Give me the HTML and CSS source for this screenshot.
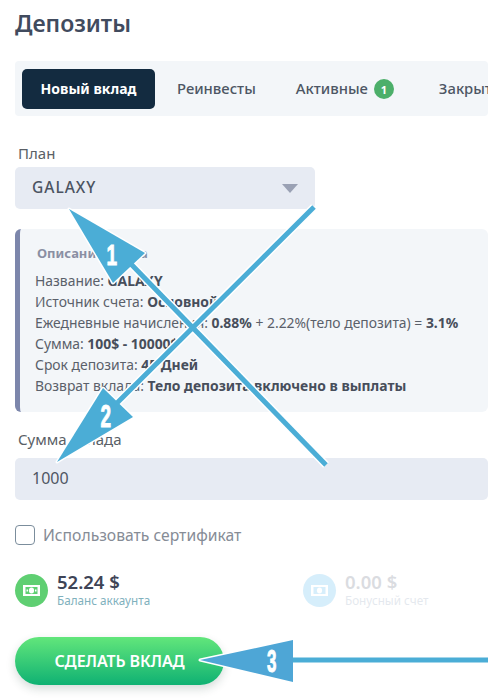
FILE: index.html
```html
<!DOCTYPE html>
<html lang="ru">
<head>
<meta charset="utf-8">
<title>Депозиты</title>
<link rel="stylesheet" href="styles.css">
</head>
<body>
<main class="page">
  <h1 class="title">Депозиты</h1>
  <nav class="tabs">
    <span class="tab tab-active">Новый вклад</span>
    <span class="tab tab-reinvest">Реинвесты</span>
    <span class="tab tab-live">Активные <span class="badge">1</span></span>
    <span class="tab">Закрытые</span>
  </nav>
  <label class="label label-plan">План</label>
  <div class="select">
    <span>GALAXY</span>
    <svg class="caret" width="16" height="9" viewBox="0 0 16 9"><path d="M0 0h16L8 9z"/></svg>
  </div>
  <section class="info">
    <h2 class="info-title">Описание плана</h2>
    <p>Название: <b>GALAXY</b></p>
    <p>Источник счета: <b>Основной</b></p>
    <p>Ежедневные начисления: <b>0.88%</b> + 2.22%(тело депозита) = <b>3.1%</b></p>
    <p>Сумма: <b>100$ - 10000$</b></p>
    <p>Срок депозита: <b>45 Дней</b></p>
    <p>Возврат вклада: <b>Тело депозита включено в выплаты</b></p>
  </section>
  <label class="label label-sum">Сумма вклада</label>
  <div class="input">1000</div>
  <div class="check">
    <span class="box"></span>
    <span>Использовать сертификат</span>
  </div>
  <div class="balances">
    <div class="balance">
      <span class="coin coin-green">
        <svg width="17" height="11" viewBox="0 0 17 11"><path fill="#fff" fill-rule="evenodd" d="M0 0h17v11H0zM2.500 2v7h12V2z"/><ellipse cx="8.500" cy="5.500" rx="2.600" ry="3" fill="#fff"/><rect x="3.500" y="4.500" width="1.500" height="2" fill="#fff"/><rect x="12" y="4.500" width="1.500" height="2" fill="#fff"/></svg>
      </span>
      <div>
        <div class="amount">52.24 $</div>
        <div class="caption">Баланс аккаунта</div>
      </div>
    </div>
    <div class="balance balance-muted">
      <span class="coin coin-blue">
        <svg width="17" height="11" viewBox="0 0 17 11"><path fill="#fff" fill-rule="evenodd" d="M0 0h17v11H0zM2.500 2v7h12V2z"/><ellipse cx="8.500" cy="5.500" rx="2.600" ry="3" fill="#fff"/></svg>
      </span>
      <div>
        <div class="amount">0.00 $</div>
        <div class="caption">Бонусный счет</div>
      </div>
    </div>
  </div>
  <button class="submit">СДЕЛАТЬ ВКЛАД</button>
</main>
<svg class="arrows" width="488" height="700" viewBox="0 0 488 700">
  <g class="halo">
    <path d="M69 209L145 253L113 283Z"/>
    <path d="M130 263L326 465"/>
    <path d="M57 462L103 388L133 417Z"/>
    <path d="M116 404L314 207"/>
    <path d="M200 660L293 640V682Z"/>
  </g>
  <g class="shaft">
    <path d="M130 263L326 465"/>
    <path d="M116 404L314 207"/>
    <path d="M290 660H488"/>
  </g>
  <path class="head" d="M69 209L145 253L113 283Z"/>
  <path class="head" d="M57 462L103 388L133 417Z"/>
  <path class="head head-3" d="M200 660L293 640V682Z"/>
  <text class="digit" transform="translate(106.500 265) scale(.95 1.450)">1</text>
  <text class="digit" transform="translate(100.500 427) scale(.95 1.550)">2</text>
  <text class="digit" transform="translate(267 672) scale(.85 1.550)">3</text>
</svg>
</body>
</html>
```
FILE: styles.css
```css
html, body {
  margin: 0;
  height: 700px;
  overflow: hidden;
  background: #fff;
}
body {
  position: relative;
  font-family: "Noto Sans", "Open Sans", sans-serif;
  color: #4a5260;
}
.page {
  width: 488px;
  padding: 8px 0 0 15px;
  box-sizing: border-box;
}
.title {
  margin: 0;
  font-size: 23px;
  line-height: 30px;
  font-weight: 600;
  color: #414b5e;
}
.tabs {
  display: flex;
  align-items: center;
  height: 55px;
  margin-top: 23px;
  padding-left: 7px;
  overflow: hidden;
  background: #f3f6f9;
  border-radius: 4px;
  font-size: 14.800px;
  font-weight: 500;
  color: #4d5664;
}
.tab {
  display: flex;
  flex: none;
  align-items: center;
  gap: 6px;
  height: 40px;
  padding-bottom: 1px;
  box-sizing: border-box;
  white-space: nowrap;
}
.tab-active {
  width: 133px;
  justify-content: center;
  background: #132b40;
  border-radius: 5px;
  color: #fff;
  font-size: 14px;
  font-weight: 700;
}
.tab-reinvest {
  margin-left: 22px;
}
.tab-live {
  margin-left: 40px;
  margin-right: 45px;
}
.badge {
  display: flex;
  align-items: center;
  justify-content: center;
  width: 20px;
  height: 20px;
  margin-top: 2px;
  border-radius: 50%;
  background: #4caf6a;
  color: #fff;
  font-size: 11px;
  font-weight: 700;
}
.label {
  display: block;
  padding-left: 3px;
  font-size: 15px;
  line-height: 20px;
  color: #5a5f66;
}
.label-plan {
  margin-top: 27px;
}
.select {
  display: flex;
  align-items: center;
  justify-content: space-between;
  width: 300px;
  height: 42px;
  margin-top: 4px;
  padding: 0 17px 0 17px;
  box-sizing: border-box;
  background: #e7ebf3;
  border-radius: 5px;
  font-size: 15.500px;
  font-weight: 500;
  letter-spacing: 1px;
  color: #4b5361;
}
.select span {
  margin-bottom: 2px;
}
.caret {
  fill: #9aa1b4;
}
.info {
  height: 183px;
  margin-top: 20px;
  padding: 14px 0 0 15px;
  box-sizing: border-box;
  background: #f3f6f9;
  border-left: 5px solid #7c86ab;
  border-radius: 6px;
  font-size: 13.900px;
  color: #5a606a;
}
.info-title {
  margin: 0 0 7px 2px;
  font-size: 13px;
  line-height: 20px;
  font-weight: 700;
  color: #8a8fa3;
}
.info p {
  margin: 0;
  line-height: 21px;
  white-space: nowrap;
}
.info b {
  font-weight: 700;
  color: #474e5b;
}
.label-sum {
  margin-top: 17px;
}
.input {
  height: 42px;
  margin-top: 9px;
  padding-left: 17px;
  background: #e7ebf3;
  border-radius: 5px;
  font-size: 16px;
  line-height: 41px;
  color: #4f5663;
}
.check {
  display: flex;
  align-items: center;
  gap: 8px;
  margin-top: 23px;
  font-size: 15.700px;
  line-height: 24px;
  color: #868c96;
}
.box {
  width: 18px;
  height: 18px;
  border: 1.500px solid #7b8d9c;
  border-radius: 4px;
}
.balances {
  display: flex;
  gap: 255px;
  margin-top: 26px;
  height: 34px;
}
.balance {
  display: flex;
  align-items: center;
  gap: 9px;
  width: 33px;
  white-space: nowrap;
}
.balance-muted {
  opacity: .28;
}
.coin {
  display: flex;
  flex: none;
  align-items: center;
  justify-content: center;
  width: 33px;
  height: 33px;
  border-radius: 50%;
}
.coin-green {
  background: #5fcf72;
}
.coin-blue {
  background: #6fc3f2;
}
.amount {
  font-size: 18.500px;
  line-height: 20px;
  font-weight: 600;
  color: #3e4456;
}
.balance-muted .amount {
  color: #7d8494;
}
.caption {
  font-size: 11.700px;
  line-height: 16px;
  color: #7fb1bd;
}
.balance-muted .caption {
  color: #9fb0c4;
}
.submit {
  display: block;
  width: 209px;
  height: 48px;
  margin-top: 30px;
  padding: 0;
  border: 0;
  border-radius: 24px;
  background: linear-gradient(180deg, #62e67b 0%, #0fb173 100%);
  box-shadow: 0 4px 10px rgba(30, 60, 50, .18);
  color: #fff;
  font-family: inherit;
  font-size: 16px;
  font-weight: 600;
  letter-spacing: -.1px;
}
.arrows {
  position: absolute;
  left: 0;
  top: 0;
}
.halo path {
  fill: #fff;
  stroke: #fff;
  stroke-width: 3;
  stroke-linejoin: round;
}
.halo path:nth-child(2),
.halo path:nth-child(4) {
  stroke-width: 8;
  fill: none;
}
.shaft path {
  stroke: #4badd6;
  stroke-width: 5;
  fill: none;
}
.head {
  fill: #4badd6;
}
.head-3 {
  fill: #4ea6d6;
}
.digit {
  font-family: "Liberation Sans", sans-serif;
  font-size: 20px;
  font-weight: 700;
  fill: #fff;
  stroke: #fff;
  stroke-width: .6px;
}
```
